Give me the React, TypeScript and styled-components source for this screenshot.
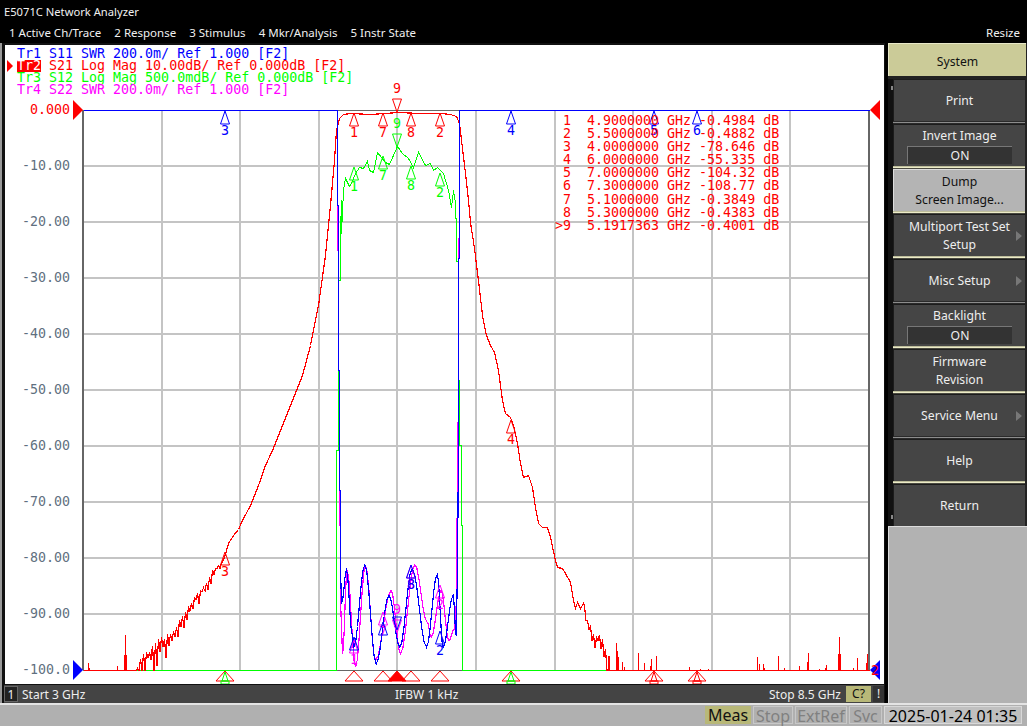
import React from 'react';
import styled, { createGlobalStyle } from 'styled-components';

const GlobalStyle = createGlobalStyle`
  html, body { margin: 0; padding: 0; background: #000; overflow: hidden; }
`;

type Pt = [number, number];

// --- trace data, everything in page pixels ---
let seed = 4711;
const rnd = () => {
  seed = (seed * 16807) % 2147483647;
  return seed / 2147483647;
};

const toPts = (pts: Pt[]) => pts.map((p) => p.join(',')).join(' ');

const lerp = (pts: Pt[], x: number) => {
  for (let i = 1; i < pts.length; i++) {
    if (x <= pts[i][0]) {
      const [x0, y0] = pts[i - 1];
      const [x1, y1] = pts[i];
      return y0 + ((y1 - y0) * (x - x0)) / (x1 - x0);
    }
  }
  return pts[pts.length - 1][1];
};

const smooth = (pts: Pt[]) => {
  const out: Pt[] = [];
  for (let i = 1; i < pts.length; i++) {
    const [x0, y0] = pts[i - 1];
    const [x1, y1] = pts[i];
    for (let s = 0; s < 6; s++) {
      const t = s / 6;
      const c = (1 - Math.cos(Math.PI * t)) / 2;
      out.push([x0 + (x1 - x0) * t, y0 + (y1 - y0) * c]);
    }
  }
  out.push(pts[pts.length - 1]);
  return out;
};

const fromRippleZoom = (pts: Pt[]): Pt[] => pts.map(([x, y]) => [320 + x / 3, 550 + y / 3]);

const leftEnvelope: Pt[] = [
  [137, 668], [147, 655], [160, 642], [170, 637], [180, 622], [187, 610], [197, 596], [207, 583], [213, 570], [220, 565],
];

const leftNoise: Pt[] = [[136, 670]];
for (let x = 137; x < 220; x += 1.5) {
  const amp = 28 - ((x - 137) / 83) * 22;
  const sign = Math.round(x / 1.5) % 2 === 0 ? 1 : -0.3;
  leftNoise.push([x, Math.min(670, lerp(leftEnvelope, x) + sign * rnd() * amp)]);
}

const redUpper: Pt[] = [
  [220, 565], [224, 557], [228, 543], [233, 535], [238, 529], [242, 520], [250, 505], [258, 485], [265, 465], [272, 450],
  [282, 425], [292, 400], [302, 375], [310, 345], [318, 305], [325, 255], [330, 205], [334, 160], [336, 130], [339, 118],
  [343, 114], [350, 113], [370, 114], [385, 113], [397, 112], [420, 113], [440, 113], [450, 114], [456, 116], [459, 123],
  [465, 173], [468, 200], [470, 222], [472, 235], [474, 248], [478, 280], [482, 315], [486, 335], [490, 345], [494, 352],
  [498, 370], [502, 400], [505, 413], [510, 417], [513, 425], [517, 443], [520, 463], [523, 477], [528, 475], [532, 487],
  [535, 507], [538, 523], [542, 527], [547, 527], [550, 537], [555, 560], [557, 567], [562, 568], [565, 573], [570, 582],
  [573, 600], [575, 608], [577, 602], [580, 608], [583, 603],
];

const rightEnvelope: Pt[] = [[583, 603], [588, 625], [593, 635], [600, 640], [604, 650], [608, 668]];

const rightNoise: Pt[] = [];
for (let x = 584; x < 608; x += 1.5) {
  const amp = 6 + ((x - 584) / 24) * 14;
  const sign = Math.round(x / 1.5) % 2 === 0 ? 1 : -0.4;
  rightNoise.push([x, Math.min(670, lerp(rightEnvelope, x) + sign * rnd() * amp)]);
}

const redTrace: Pt[] = [[83, 670], ...leftNoise, ...redUpper, ...rightNoise, [608, 670], [869, 670]];

const spikes: Pt[] = [
  [88, 662], [89, 667], [117, 665], [124, 654], [125, 634], [126, 654], [608, 655], [609, 655], [616, 642], [617, 650],
  [618, 656], [622, 661], [624, 666], [638, 652], [638, 663], [644, 662], [650, 665], [651, 658], [656, 655], [689, 666],
  [700, 668], [708, 668], [757, 656], [759, 663], [763, 663], [764, 667], [778, 655], [784, 667], [799, 665], [807, 661],
  [808, 652], [819, 668], [825, 667], [826, 664], [838, 653], [839, 636], [840, 653], [853, 667], [857, 657], [866, 662],
  [867, 653],
];

const greenTop: Pt[] = [
  [341, 200], [341, 233], [343, 190], [345, 177], [346, 180], [349, 186], [351, 183], [355, 173], [359, 167], [363, 168],
  [363, 168], [367, 161], [369, 170], [373, 172], [377, 152], [385, 162], [389, 164], [397, 146], [402, 153], [408, 158],
  [413, 167], [418, 152], [425, 165], [430, 163], [433, 170], [437, 167], [443, 173], [448, 190], [451, 207], [453, 190],
  [455, 203], [455, 218],
];

const greenTrace: Pt[] = [
  [83, 670], [336, 670], [336, 450], [338, 450], [338, 280], [340, 280], [340, 233],
  ...greenTop,
  [456, 218], [456, 261], [458, 261], [458, 380], [459, 380], [459, 445], [461, 445], [461, 525], [462, 525], [462, 670], [608, 670],
];

const blueRipple = fromRippleZoom([
  [64, 155], [78, 58], [95, 250], [100, 290], [133, 42], [167, 340], [205, 135], [238, 290], [275, 55], [318, 290],
  [350, 72], [368, 290], [398, 135], [407, 255],
]);

const magentaRipple = fromRippleZoom([
  [66, 310], [80, 60], [105, 350], [135, 45], [165, 330], [212, 120], [240, 310], [283, 42], [320, 215], [332, 260],
  [362, 120], [385, 270], [402, 235],
]);

const blueTrace: Pt[] = [
  [83, 110], [337, 110], [337, 205], [338, 205], [338, 370], [339, 370], [339, 490], [340, 490], [340, 570], [341, 600],
  ...smooth(blueRipple),
  [457, 570], [458, 445], [458, 258], [459, 258], [459, 110], [869, 110],
];

const magentaTrace: Pt[] = [
  [337, 205], [337, 250], [338, 250], [338, 370], [339, 370], [339, 525], [340, 525], [340, 600],
  ...smooth(magentaRipple),
  [456, 600], [456, 518], [457, 518], [457, 445], [458, 408], [458, 258], [459, 225],
];

const gridX = Array.from({ length: 9 }, (_, i) => 83 + 78.6 * (i + 1));
const gridY = Array.from({ length: 9 }, (_, i) => 166 + 56 * i);
const scaleLabels = ['-10.00', '-20.00', '-30.00', '-40.00', '-50.00', '-60.00', '-70.00', '-80.00', '-90.00'];

const RED = '#ff0000';
const BLUE = '#0000ff';
const GREEN = '#00ff00';
const MAGENTA = '#ff00ff';

type MarkProps = { x: number; tip: number; color: string; label: string; down?: boolean; labelColor?: string };

const Mark = ({ x, tip, color, label, down, labelColor }: MarkProps) => {
  const base = down ? tip - 13 : tip + 13;
  const labelY = down ? base - 6 : base + 11;
  return (
    <g>
      <polygon points={`${x},${tip} ${x - 4.5},${base} ${x + 4.5},${base}`} fill="none" stroke={color} strokeWidth={1} />
      <text x={x} y={labelY} textAnchor="middle" fill={labelColor || color}>{label}</text>
    </g>
  );
};

const StimMark = ({ x, filled, inner }: { x: number; filled?: boolean; inner?: string }) => (
  <g>
    <polygon
      points={`${x},671 ${x - 9},681 ${x + 9},681`}
      fill={filled ? RED : '#fff'}
      stroke={RED}
      strokeWidth={1}
    />
    {inner && (
      <g>
        <polygon points={`${x},672 ${x - 3},681 ${x + 3},681`} fill="none" stroke={inner} strokeWidth={1} />
        <rect x={x - 4} y={681} width={8} height={3} fill="none" stroke={inner} strokeWidth={1} />
      </g>
    )}
  </g>
);

const markerTable = [
  ' 1  4.9000000 GHz -0.4984 dB',
  ' 2  5.5000000 GHz -0.4882 dB',
  ' 3  4.0000000 GHz -78.646 dB',
  ' 4  6.0000000 GHz -55.335 dB',
  ' 5  7.0000000 GHz -104.32 dB',
  ' 6  7.3000000 GHz -108.77 dB',
  ' 7  5.1000000 GHz -0.3849 dB',
  ' 8  5.3000000 GHz -0.4383 dB',
  '>9  5.1917363 GHz -0.4001 dB',
];

const legend = [
  { color: BLUE, tr: 'Tr1', text: 'S11 SWR 200.0m/ Ref 1.000 [F2]' },
  { color: RED, tr: 'Tr2', text: 'S21 Log Mag 10.00dB/ Ref 0.000dB [F2]', active: true },
  { color: GREEN, tr: 'Tr3', text: 'S12 Log Mag 500.0mdB/ Ref 0.000dB [F2]' },
  { color: MAGENTA, tr: 'Tr4', text: 'S22 SWR 200.0m/ Ref 1.000 [F2]' },
];

const menuItems = ['1 Active Ch/Trace', '2 Response', '3 Stimulus', '4 Mkr/Analysis', '5 Instr State'];

type SepTone = 'cream' | 'gray';
type KeyDef = { label: string[]; toggle?: string; arrow?: boolean; selected?: boolean; sep?: SepTone };

const keys: KeyDef[] = [
  { label: ['Print'], sep: 'gray' },
  { label: ['Invert Image'], toggle: 'ON', sep: 'cream' },
  { label: ['Dump', 'Screen Image...'], selected: true, sep: 'cream' },
  { label: ['Multiport Test Set', 'Setup'], arrow: true, sep: 'cream' },
  { label: ['Misc Setup'], arrow: true, sep: 'gray' },
  { label: ['Backlight'], toggle: 'ON', sep: 'cream' },
  { label: ['Firmware', 'Revision'], sep: 'cream' },
  { label: ['Service Menu'], arrow: true, sep: 'gray' },
  { label: ['Help'], sep: 'cream' },
  { label: ['Return'] },
];

export default function App() {
  return (
    <Screen>
      <GlobalStyle />
      <TitleBar>E5071C Network Analyzer</TitleBar>
      <MenuBar>
        {menuItems.map((m) => (
          <MenuItem key={m}>{m}</MenuItem>
        ))}
        <ResizeItem>Resize</ResizeItem>
      </MenuBar>
      <Main>
        <ChannelColumn>
          <ChartPanel>
            <Plot viewBox="5 45 879 639" width={879} height={639}>
              {gridX.map((x) => (
                <line key={x} x1={x} x2={x} y1={110} y2={670} stroke="#c4c4c4" strokeWidth={2} shapeRendering="crispEdges" />
              ))}
              {gridY.map((y) => (
                <line key={y} x1={83} x2={869} y1={y} y2={y} stroke="#c4c4c4" strokeWidth={2} shapeRendering="crispEdges" />
              ))}
              <line x1={83} x2={83} y1={110} y2={670} stroke="#666" strokeWidth={2} shapeRendering="crispEdges" />
              <line x1={869} x2={869} y1={110} y2={670} stroke="#666" strokeWidth={2} shapeRendering="crispEdges" />
              <line x1={83} x2={869} y1={110.5} y2={110.5} stroke="#666" strokeWidth={1} shapeRendering="crispEdges" />
              <line x1={83} x2={869} y1={670.5} y2={670.5} stroke="#666" strokeWidth={1} shapeRendering="crispEdges" />

              <text x={70} y={114} textAnchor="end" fill={RED}>0.000</text>
              {scaleLabels.map((s, i) => (
                <text key={s} x={70} y={170 + 56 * i} textAnchor="end" fill="#5f7080">{s}</text>
              ))}
              <text x={70} y={674} textAnchor="end" fill="#5f7080">-100.0</text>

              <g shapeRendering="crispEdges" fill="none" transform="translate(0.5 0.5)">
                <polyline points={toPts(greenTrace)} stroke={GREEN} strokeWidth={1} />
                <g stroke={RED} strokeWidth={1}>
                  {spikes.map(([x, y], i) => (
                    <line key={i} x1={x} x2={x} y1={670} y2={y} />
                  ))}
                </g>
                <polyline points={toPts(redTrace)} stroke={RED} strokeWidth={1.2} />
                <polyline points={toPts(magentaTrace)} stroke={MAGENTA} strokeWidth={1.2} />
                <polyline points={toPts(blueTrace)} stroke={BLUE} strokeWidth={1.2} />
              </g>

              <polygon points="83,110 73,100 73,120" fill={RED} />
              <polygon points="83,670 73,660 73,680" fill={BLUE} />
              <polygon points="870,110 880,100 880,120" fill={RED} />
              <polygon points="870,670 880,660 880,680" fill={BLUE} />

              {[[225, '3'], [511, '4'], [654, '5'], [697, '6']].map(([x, l]) => (
                <Mark key={l as string} x={x as number} tip={111} color={BLUE} label={l as string} />
              ))}

              <Mark x={354} tip={113} color={RED} label="1" />
              <Mark x={383} tip={113} color={RED} label="7" />
              <Mark x={411} tip={113} color={RED} label="8" />
              <Mark x={440} tip={113} color={RED} label="2" />
              <Mark x={397} tip={112} color={RED} label="9" down />
              <Mark x={225} tip={552} color={RED} label="3" />
              <Mark x={511} tip={420} color={RED} label="4" />

              <Mark x={354} tip={167} color={GREEN} label="1" />
              <Mark x={383} tip={156} color={GREEN} label="7" />
              <Mark x={411} tip={166} color={GREEN} label="8" />
              <Mark x={440} tip={173} color={GREEN} label="2" />
              <Mark x={397} tip={147} color={GREEN} label="9" down />

              <Mark x={354} tip={640} color={MAGENTA} label="1" />
              <Mark x={383} tip={612} color={MAGENTA} label="7" />
              <Mark x={411} tip={565} color={MAGENTA} label="8" />
              <Mark x={440} tip={585} color={MAGENTA} label="2" />
              <Mark x={397} tip={633} color={MAGENTA} label="9" down />
              <Mark x={354} tip={637} color={BLUE} label="" />
              <Mark x={383} tip={622} color={BLUE} label="" />
              <Mark x={411} tip={565} color={BLUE} label="8" />
              <Mark x={440} tip={631} color={BLUE} label="2" />
              <Mark x={397} tip={630} color={BLUE} label="" down />

              <StimMark x={225} inner={GREEN} />
              <StimMark x={354} />
              <StimMark x={383} />
              <StimMark x={411} />
              <StimMark x={440} />
              <StimMark x={397} filled />
              <StimMark x={511} inner={GREEN} />
              <StimMark x={654} inner={RED} />
              <StimMark x={697} inner={RED} />
              <text x={875} y={675} textAnchor="middle" fill={RED}>2</text>
            </Plot>

            <Legend>
              {legend.map((row) => (
                <LegendRow key={row.tr} $color={row.color}>
                  {row.active && <ActiveArrow />}
                  <TraceTag $active={row.active}>{row.tr}</TraceTag> {row.text}
                </LegendRow>
              ))}
            </Legend>

            <MarkerTable>
              {markerTable.map((r) => (
                <MarkerRow key={r}>{r}</MarkerRow>
              ))}
            </MarkerTable>
          </ChartPanel>
          <ChannelStatus>
            <ChannelCell>1</ChannelCell>
            <StartLabel>Start 3 GHz</StartLabel>
            <IfbwLabel>IFBW 1 kHz</IfbwLabel>
            <StopLabel>Stop 8.5 GHz</StopLabel>
            <CalCell>C?</CalCell>
            <WarnCell>!</WarnCell>
          </ChannelStatus>
        </ChannelColumn>
        <SoftPanel>
          <SystemKey>System</SystemKey>
          <KeyArea>
            <ScrollStrip>
              <ScrollMark />
              <ScrollMark />
            </ScrollStrip>
            <KeyStack>
              {keys.map((k) => (
                <React.Fragment key={k.label[0]}>
                  <SoftKey $selected={k.selected}>
                    {k.label.map((l) => (
                      <KeyLine key={l}>{l}</KeyLine>
                    ))}
                    {k.toggle && <ToggleBox>{k.toggle}</ToggleBox>}
                    {k.arrow && <KeyArrow />}
                  </SoftKey>
                  {k.sep && <KeySeparator $tone={k.sep} />}
                </React.Fragment>
              ))}
            </KeyStack>
          </KeyArea>
          <SoftFiller />
        </SoftPanel>
      </Main>
      <Footer>
        <FooterCell $width={46} $tone="active">Meas</FooterCell>
        <FooterCell $width={40} $tone="off">Stop</FooterCell>
        <FooterCell $width={52} $tone="off">ExtRef</FooterCell>
        <FooterCell $width={33} $tone="off">Svc</FooterCell>
        <FooterCell $width={138} $tone="clock">2025-01-24 01:35</FooterCell>
      </Footer>
    </Screen>
  );
}

const UI_FONT = `"Noto Sans", "Liberation Sans", sans-serif`;
const MONO_FONT = `"DejaVu Sans Mono", "Liberation Mono", monospace`;

const Screen = styled.div`
  width: 1027px;
  height: 726px;
  display: flex;
  flex-direction: column;
  background: #000;
  font-family: ${UI_FONT};
  overflow: hidden;
`;

const TitleBar = styled.div`
  height: 20px;
  line-height: 23px;
  padding-left: 4px;
  font-size: 11.2px;
  color: #f0f0f0;
  background: #000;
`;

const MenuBar = styled.div`
  height: 23px;
  display: flex;
  align-items: center;
  padding: 2px 7px 0 9px;
  box-sizing: border-box;
  gap: 13px;
  font-size: 11.5px;
  color: #f0f0f0;
`;

const MenuItem = styled.span`
  white-space: nowrap;
`;

const ResizeItem = styled.span`
  margin-left: auto;
`;

const Main = styled.div`
  flex: 1;
  min-height: 0;
  display: flex;
`;

const ChannelColumn = styled.div`
  width: 885px;
  padding: 2px 1px 0 5px;
  box-sizing: border-box;
  display: flex;
  flex-direction: column;
  background: #111;
  box-shadow: inset 2px 0 0 #999;
`;

const ChartPanel = styled.div`
  position: relative;
  height: 639px;
  background: #fff;
  overflow: hidden;
`;

const Plot = styled.svg`
  display: block;
  font-family: ${MONO_FONT};
  font-size: 13.3px;
`;

const Legend = styled.div`
  position: absolute;
  left: 12px;
  top: 3px;
  font-family: ${MONO_FONT};
  font-size: 13.3px;
`;

const LegendRow = styled.div<{ $color: string }>`
  position: relative;
  height: 12px;
  line-height: 12px;
  white-space: pre;
  color: ${(p) => p.$color};
`;

const ActiveArrow = styled.span`
  position: absolute;
  left: -10px;
  top: 0;
  width: 0;
  height: 0;
  border-left: 6px solid #ff0000;
  border-top: 6px solid transparent;
  border-bottom: 6px solid transparent;
`;

const TraceTag = styled.span<{ $active?: boolean }>`
  display: inline-block;
  ${(p) => (p.$active ? 'background: #ff0000; color: #fff;' : '')}
`;

const MarkerTable = styled.div`
  position: absolute;
  left: 550px;
  top: 69px;
  font-family: ${MONO_FONT};
  font-size: 13.3px;
  color: #ff0000;
`;

const MarkerRow = styled.div`
  height: 13.1px;
  line-height: 13px;
  white-space: pre;
`;

const ChannelStatus = styled.div`
  height: 18px;
  margin-top: 1px;
  margin-left: -1px;
  display: flex;
  align-items: center;
  position: relative;
  background: #444;
  color: #eee;
  font-size: 12px;
`;

const ChannelCell = styled.span`
  width: 14px;
  height: 16px;
  line-height: 16px;
  text-align: center;
  background: #222;
  border: 1px solid #666;
  box-sizing: border-box;
`;

const StartLabel = styled.span`
  margin-left: 4px;
  width: 130px;
`;

const IfbwLabel = styled.span`
  margin-left: 243px;
`;

const StopLabel = styled.span`
  margin-left: auto;
`;

const CalCell = styled.span`
  width: 25px;
  height: 16px;
  margin-left: 5px;
  line-height: 16px;
  text-align: center;
  background: #b8b878;
  color: #111;
`;

const WarnCell = styled.span`
  width: 11px;
  height: 16px;
  margin-left: 2px;
  line-height: 16px;
  text-align: center;
  background: #333;
  color: #eee;
`;

const SoftPanel = styled.div`
  flex: 1;
  margin-left: 3px;
  padding-right: 1px;
  display: flex;
  flex-direction: column;
  background: #222;
  font-size: 12.2px;
`;

const SystemKey = styled.div`
  height: 33px;
  line-height: 35px;
  margin-bottom: 3px;
  text-align: center;
  background: #cbcb98;
  border-top: 1px solid #e8e8c8;
  border-left: 1px solid #e8e8c8;
  box-sizing: border-box;
  color: #111;
`;

const KeyArea = styled.div`
  display: flex;
`;

const ScrollStrip = styled.div`
  width: 5px;
  display: flex;
  flex-direction: column;
  justify-content: space-between;
  padding: 7px 0;
  box-sizing: border-box;
  background: #111;
`;

const ScrollMark = styled.span`
  width: 2px;
  height: 4px;
  margin-left: 3px;
  background: #888;
`;

const KeyStack = styled.div`
  flex: 1;
  margin-right: 1px;
  display: flex;
  flex-direction: column;
`;

const SoftKey = styled.div<{ $selected?: boolean }>`
  position: relative;
  height: 42px;
  display: flex;
  flex-direction: column;
  align-items: center;
  justify-content: center;
  box-sizing: border-box;
  background: ${(p) => (p.$selected ? '#b4b4b4' : '#454545')};
  color: ${(p) => (p.$selected ? '#111' : '#eee')};
  border-top: 1px solid ${(p) => (p.$selected ? '#ddd' : '#1c1c1c')};
  border-left: 1px solid ${(p) => (p.$selected ? '#ddd' : '#1c1c1c')};
`;

const KeyLine = styled.span`
  height: 18px;
  line-height: 18px;
  white-space: nowrap;
`;

const ToggleBox = styled.span`
  width: 105px;
  height: 18px;
  margin-top: 1px;
  line-height: 18px;
  text-align: center;
  background: #333;
  border-top: 1px solid #777;
  border-left: 1px solid #777;
  box-sizing: border-box;
`;

const KeyArrow = styled.span`
  position: absolute;
  right: 3px;
  top: 50%;
  margin-top: -5px;
  width: 0;
  height: 0;
  border-left: 6px solid #777;
  border-top: 5px solid transparent;
  border-bottom: 5px solid transparent;
`;

const KeySeparator = styled.div<{ $tone: SepTone }>`
  height: 3px;
  box-sizing: border-box;
  background: ${(p) => (p.$tone === 'cream' ? '#ecebc8' : '#8c8c8c')};
  border-top: 1px solid ${(p) => (p.$tone === 'cream' ? '#bdbd9a' : '#2a2a2a')};
  border-bottom: 1px solid ${(p) => (p.$tone === 'cream' ? '#4a4a40' : '#2a2a2a')};
`;

const SoftFiller = styled.div`
  flex: 1;
  margin-right: -1px;
  background: #b2b2b2;
  border-top: 1px solid #ddd;
  border-left: 1px solid #ddd;
`;

const Footer = styled.div`
  height: 23px;
  display: flex;
  justify-content: flex-end;
  align-items: flex-end;
  gap: 2px;
  padding: 0 5px 2px 0;
  box-sizing: border-box;
  background: #b0b0b0;
  border-top: 2px solid #e4e4e4;
  font-size: 16px;
`;

const footerTones = {
  active: 'background: #b8b878; color: #111;',
  off: 'background: #b0b0b0; color: #808080; border: 1px solid #c8c8c8;',
  clock: 'background: #c0c0c0; color: #000; border: 1px solid #d8d8d8;',
};

const FooterCell = styled.span<{ $width: number; $tone: keyof typeof footerTones }>`
  width: ${(p) => p.$width}px;
  height: 18px;
  line-height: 18px;
  text-align: center;
  box-sizing: border-box;
  white-space: nowrap;
  ${(p) => footerTones[p.$tone]}
`;
